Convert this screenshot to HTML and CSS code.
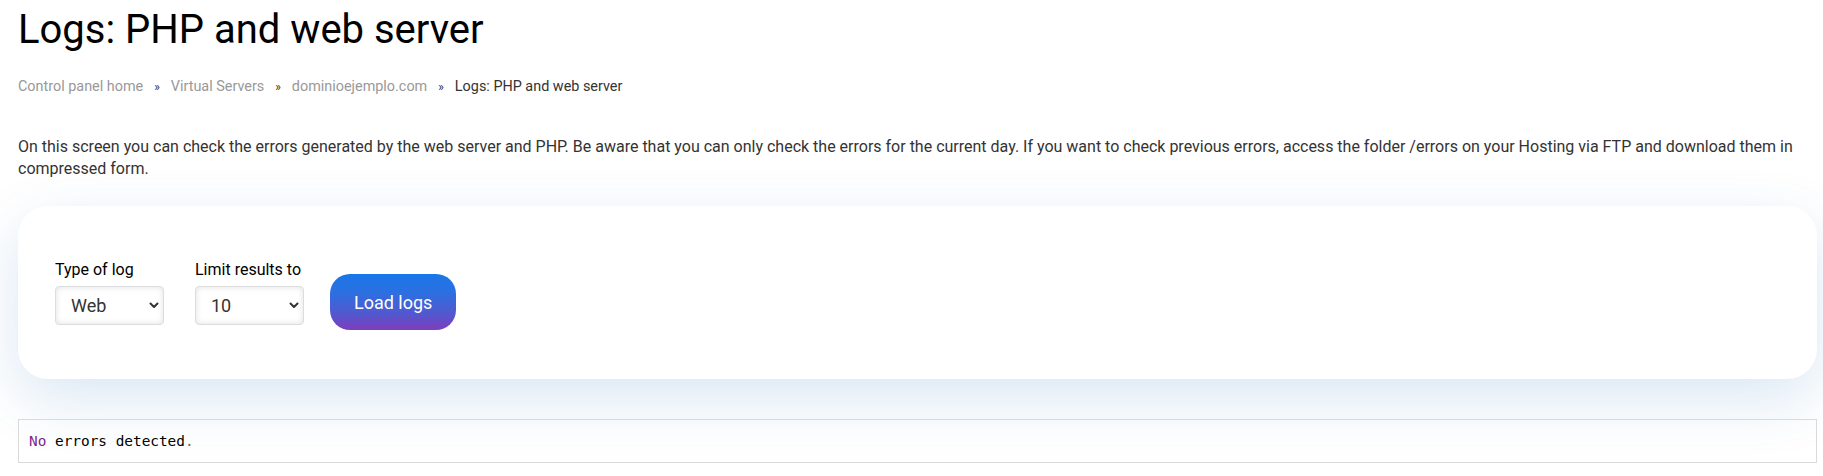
FILE: index.html
```html
<!DOCTYPE html>
<html lang="en">
<head>
<meta charset="utf-8">
<title>Logs: PHP and web server</title>
<link rel="stylesheet" href="styles.css">
</head>
<body>
<main class="page">
  <h1 class="title">Logs: PHP and web server</h1>
  <nav class="breadcrumb">
    <a href="#" class="crumb">Control panel home</a>
    <span class="sep">»</span>
    <a href="#" class="crumb">Virtual Servers</a>
    <span class="sep">»</span>
    <a href="#" class="crumb">dominioejemplo.com</a>
    <span class="sep">»</span>
    <span class="crumb current">Logs: PHP and web server</span>
  </nav>
  <p class="intro">On this screen you can check the errors generated by the web server and PHP. Be aware that you can only check the errors for the current day. If you want to check previous errors, access the folder /errors on your Hosting via FTP and download them in compressed form.</p>
  <section class="card">
    <form class="log-form">
      <div class="field">
        <label class="field-label" for="log-type">Type of log</label>
        <div class="select-wrap">
          <select id="log-type" class="select">
            <option>Web</option>
            <option>PHP</option>
          </select>
          <svg class="chevron" width="10" height="7" viewBox="0 0 10 7" aria-hidden="true"><path d="M1.5 1.5 L5 5 L8.5 1.5" fill="none" stroke="#333" stroke-width="2" stroke-linecap="round" stroke-linejoin="round"/></svg>
        </div>
      </div>
      <div class="field">
        <label class="field-label" for="log-limit">Limit results to</label>
        <div class="select-wrap">
          <select id="log-limit" class="select">
            <option>10</option>
            <option>50</option>
            <option>100</option>
          </select>
          <svg class="chevron" width="10" height="7" viewBox="0 0 10 7" aria-hidden="true"><path d="M1.5 1.5 L5 5 L8.5 1.5" fill="none" stroke="#333" stroke-width="2" stroke-linecap="round" stroke-linejoin="round"/></svg>
        </div>
      </div>
      <button type="button" class="btn">Load logs</button>
    </form>
  </section>
  <pre class="log"><code><span class="tok-kw">No</span> errors detected<span class="tok-punct">.</span></code></pre>
</main>
</body>
</html>
```

FILE: styles.css
```css
html, body {
  margin: 0;
  padding: 0;
  background: #ffffff;
}

body {
  font-family: Roboto, "Liberation Sans", Arial, sans-serif;
  color: #333333;
}

.page {
  padding: 6px 6px 0 18px;
}

.title {
  margin: 0;
  font-size: 40px;
  font-weight: 400;
  line-height: 47px;
  color: #000000;
}

.breadcrumb {
  display: flex;
  align-items: baseline;
  margin-top: 26px;
  font-size: 14.4px;
  line-height: 16px;
}

.crumb {
  color: #999999;
  text-decoration: none;
}

.crumb.current {
  color: #333333;
}

.sep {
  margin: 0 11px;
  font-size: 12px;
  color: #333333;
}

.intro {
  margin: 41px 0 0;
  font-size: 16px;
  line-height: 22px;
  color: #333333;
}

.card {
  margin-top: 26px;
  padding: 54px 37px 49px;
  background: #ffffff;
  border-radius: 30px;
  box-shadow: 0 20px 60px rgba(24, 104, 180, 0.16);
}

.log-form {
  display: flex;
  align-items: flex-start;
}

.field {
  display: flex;
  flex-direction: column;
  width: 109px;
  margin-right: 31px;
}

.field + .field {
  margin-right: 26px;
}

.field-label {
  font-size: 16px;
  line-height: 19px;
  color: #000000;
  white-space: nowrap;
  margin-bottom: 7px;
}

.select-wrap {
  position: relative;
}

.select {
  appearance: none;
  -webkit-appearance: none;
  box-sizing: border-box;
  width: 109px;
  height: 39px;
  padding: 0 20px 0 15px;
  font-family: Roboto, "Liberation Sans", Arial, sans-serif;
  font-size: 18px;
  color: #333333;
  background: #ffffff;
  border: 1px solid #dddddd;
  border-radius: 4px;
  box-shadow: inset 0 0 6px rgba(0, 0, 0, 0.12);
}

.chevron {
  position: absolute;
  right: 5px;
  top: 16px;
  pointer-events: none;
}

.btn {
  margin-top: 14px;
  height: 56px;
  padding: 0 24px;
  border: none;
  border-radius: 20px;
  font-family: Roboto, "Liberation Sans", Arial, sans-serif;
  font-size: 18px;
  color: #ffffff;
  background: linear-gradient(180deg, #1a76e8 0%, #2a71e2 30%, #5159cf 70%, #7d3dbd 100%);
  cursor: pointer;
}

.log {
  margin: 40px 0 0;
  padding: 11px 10px;
  border: 1px solid #dadada;
  background: transparent;
  font-family: "DejaVu Sans Mono", "Liberation Mono", monospace;
  font-size: 14.4px;
  line-height: 20px;
  color: #000000;
}

.tok-kw {
  color: #7f1f8d;
}

.tok-punct {
  color: #666666;
}
```
